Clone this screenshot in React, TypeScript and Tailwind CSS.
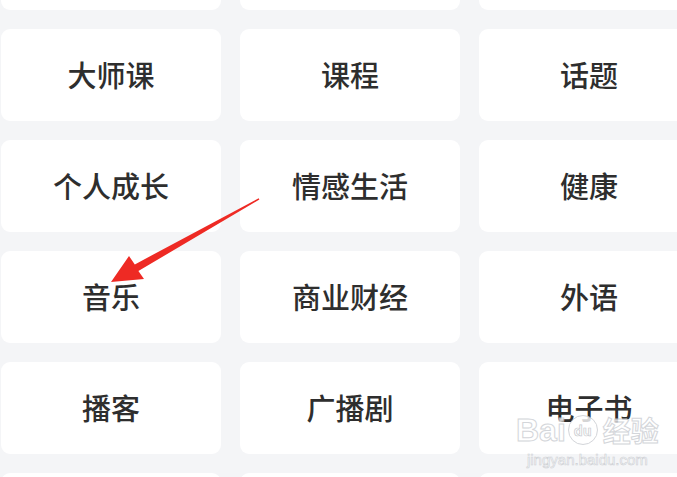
import React from "react";

const rows = [
  ["", "", ""],
  ["大师课", "课程", "话题"],
  ["个人成长", "情感生活", "健康"],
  ["音乐", "商业财经", "外语"],
  ["播客", "广播剧", "电子书"],
  ["", "", ""],
];

export default function App() {
  return (
    <div
      className="relative w-[677px] h-[477px] overflow-hidden bg-[#f4f5f7]"
      style={{ fontFamily: '"Noto Sans CJK SC", "Noto Sans", sans-serif' }}
    >
      <div className="grid grid-cols-[220px_220px_220px] gap-x-[19px] gap-y-[19px] pl-[1px] mt-[-82px]">
        {rows.flat().map((label, i) => (
          <div
            key={i}
            className="h-[92px] bg-white rounded-[9px] flex items-center justify-center text-[29px] font-medium text-[#2e2e2e]"
          >
            {label}
          </div>
        ))}
      </div>

      {/* red arrow annotation */}
      <svg className="absolute left-0 top-0 pointer-events-none" width="677" height="477">
        <polygon
          points="111,282 129,256 134.8,264.4 258.7,198.2 259.4,199.5 138.4,271 144,279"
          fill="#ee2a24"
        />
      </svg>

      {/* watermark */}
      <div className="absolute left-[516px] top-[414px] flex flex-col items-center pointer-events-none opacity-80">
        <div className="flex items-center gap-[2px] leading-none">
          <span
            className="text-[32px] font-bold text-white"
            style={{ fontFamily: '"Liberation Sans", sans-serif', WebkitTextStroke: "1px #c9ccd1" }}
          >
            Bai
          </span>
          <span
            className="w-[30px] h-[30px] rounded-full bg-white border border-[#c9ccd1] flex items-center justify-center text-[14px] font-bold text-white"
            style={{ WebkitTextStroke: "0.7px #b8bcc2" }}
          >
            du
          </span>
          <span
            className="text-[28px] font-bold text-white ml-[3px]"
            style={{ WebkitTextStroke: "1px #c9ccd1" }}
          >
            经验
          </span>
        </div>
        <span
          className="text-[15px] text-white leading-none mt-[6px]"
          style={{ fontFamily: '"Liberation Sans", sans-serif', WebkitTextStroke: "0.6px #c4c7cc" }}
        >
          jingyan.baidu.com
        </span>
      </div>
    </div>
  );
}
